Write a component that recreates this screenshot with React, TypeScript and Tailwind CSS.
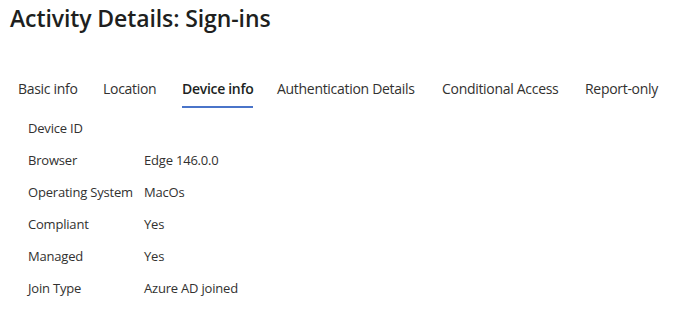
import clsx from "clsx";

const TABS = [
  { label: "Basic info", w: "w-[85px]" },
  { label: "Location", w: "w-[79px]" },
  { label: "Device info", w: "w-[95px]", active: true },
  { label: "Authentication Details", w: "w-[165px]" },
  { label: "Conditional Access", w: "w-[143px]" },
  { label: "Report-only", w: "w-[90px]" },
];

const ROWS: [string, string][] = [
  ["Device ID", ""],
  ["Browser", "Edge 146.0.0"],
  ["Operating System", "MacOs"],
  ["Compliant", "Yes"],
  ["Managed", "Yes"],
  ["Join Type", "Azure AD joined"],
];

export default function App() {
  return (
    <div
      className="h-[332px] w-[680px] overflow-hidden bg-white text-[#323130]"
      style={{ fontFamily: '"Segoe UI", "Open Sans", sans-serif' }}
    >
      {/* Header */}
      <h1 className="pl-[10px] pt-[3px] text-[23px] font-semibold leading-[30px] tracking-[-0.1px] text-[#201f1e]">
        Activity Details: Sign-ins
      </h1>

      {/* Tabs */}
      <div className="mt-[43px] flex pl-[18px]">
        {TABS.map((t) => (
          <div key={t.label} className={clsx("shrink-0", t.w)}>
            <span
              className={clsx(
                "inline-block border-b-2 pb-[7px] text-[14px] leading-[20px] tracking-[-0.3px] whitespace-nowrap",
                t.active ? "border-[#4a74c9] font-semibold text-[#201f1e]" : "border-transparent",
              )}
            >
              {t.label}
            </span>
          </div>
        ))}
      </div>

      {/* Details */}
      <div className="mt-[4px] pl-[28px]">
        {ROWS.map(([k, v]) => (
          <div key={k} className="flex h-[32px] items-center text-[13px] leading-[18px] tracking-[-0.2px]">
            <span className="w-[116px] shrink-0">{k}</span>
            <span>{v}</span>
          </div>
        ))}
      </div>
    </div>
  );
}
